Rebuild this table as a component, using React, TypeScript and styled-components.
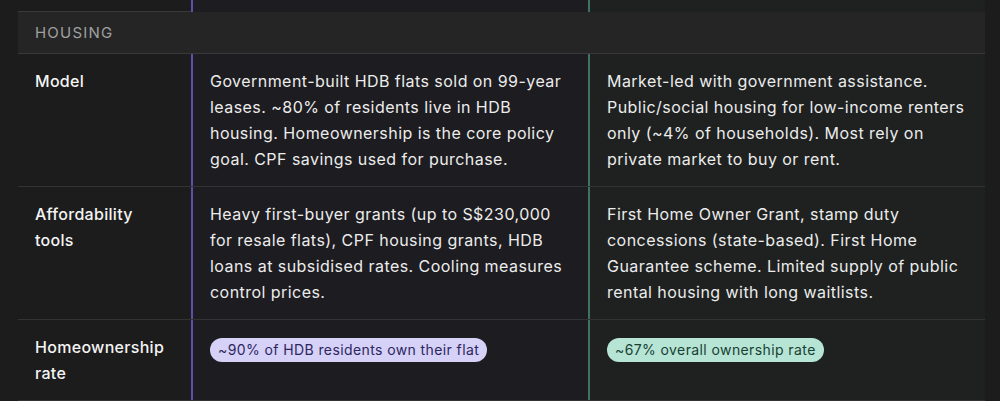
import React from 'react';
import styled, { createGlobalStyle } from 'styled-components';

const GlobalStyle = createGlobalStyle`
  html, body {
    margin: 0;
    padding: 0;
    background: #1c1c1c;
  }
  body {
    font-family: Inter, 'Noto Sans', sans-serif;
    -webkit-font-smoothing: antialiased;
  }
`;

type Accent = 'purple' | 'green';

const accentLine: Record<Accent, string> = {
  purple: '#5b51aa',
  green: '#3e7262',
};

const accentBg: Record<Accent, string> = {
  purple: '#1d1c20',
  green: '#1e2120',
};

const pillBg: Record<Accent, string> = {
  purple: '#d6d1f7',
  green: '#b6e4d5',
};

const pillText: Record<Accent, string> = {
  purple: '#2c2661',
  green: '#183f33',
};

const rows = [
  {
    label: 'Model',
    sg: 'Government-built HDB flats sold on 99-year leases. ~80% of residents live in HDB housing. Homeownership is the core policy goal. CPF savings used for purchase.',
    au: 'Market-led with government assistance. Public/social housing for low-income renters only (~4% of households). Most rely on private market to buy or rent.',
  },
  {
    label: 'Affordability tools',
    sg: 'Heavy first-buyer grants (up to S$230,000 for resale flats), CPF housing grants, HDB loans at subsidised rates. Cooling measures control prices.',
    au: 'First Home Owner Grant, stamp duty concessions (state-based). First Home Guarantee scheme. Limited supply of public rental housing with long waitlists.',
  },
];

export default function App() {
  return (
    <>
      <GlobalStyle />
      <Page>
        <Table>
          <StubRow>
            <Cell />
            <Cell $accent="purple" />
            <Cell $accent="green" />
          </StubRow>
          <SectionHeader>Housing</SectionHeader>
          {rows.map((r) => (
            <Row key={r.label}>
              <LabelCell>{r.label}</LabelCell>
              <Cell $accent="purple">{r.sg}</Cell>
              <Cell $accent="green">{r.au}</Cell>
            </Row>
          ))}
          <Row>
            <LabelCell>Homeownership rate</LabelCell>
            <Cell $accent="purple">
              <Pill $accent="purple">~90% of HDB residents own their flat</Pill>
            </Cell>
            <Cell $accent="green">
              <Pill $accent="green">~67% overall ownership rate</Pill>
            </Cell>
          </Row>
        </Table>
      </Page>
    </>
  );
}

const Page = styled.div`
  width: 1000px;
  height: 401px;
  overflow: hidden;
  background: #1c1c1c;
`;

const Table = styled.div`
  width: 967px;
  margin-left: 18px;
  display: flex;
  flex-direction: column;
`;

const Row = styled.div`
  display: grid;
  grid-template-columns: 173px 397px 397px;
  border-bottom: 1px solid #333333;
  background: #1c1c1c;
`;

const StubRow = styled(Row)`
  height: 11px;
  border-bottom: 1px solid #393939;
`;

const SectionHeader = styled.div`
  height: 41px;
  display: flex;
  align-items: center;
  padding-left: 17px;
  background: #252525;
  border-bottom: 1px solid #393939;
  color: #a0a0a0;
  font-size: 15px;
  font-weight: 400;
  letter-spacing: 1.2px;
  text-transform: uppercase;
`;

const Cell = styled.div<{ $accent?: Accent }>`
  padding: 14px 14px 14px 17px;
  font-size: 16px;
  line-height: 26px;
  letter-spacing: 0.45px;
  color: #ececec;
  border-left: ${(p) => (p.$accent ? `2px solid ${accentLine[p.$accent]}` : 'none')};
  background: ${(p) => (p.$accent ? accentBg[p.$accent] : 'transparent')};
`;

const LabelCell = styled(Cell)`
  font-weight: 500;
  color: #f4f4f4;
  letter-spacing: 0.3px;
  padding-right: 16px;
`;

const Pill = styled.span<{ $accent: Accent }>`
  display: inline-block;
  margin-top: 4px;
  padding: 0 8px;
  height: 24px;
  line-height: 24px;
  border-radius: 12px;
  font-size: 14px;
  letter-spacing: 0.4px;
  background: ${(p) => pillBg[p.$accent]};
  color: ${(p) => pillText[p.$accent]};
`;
